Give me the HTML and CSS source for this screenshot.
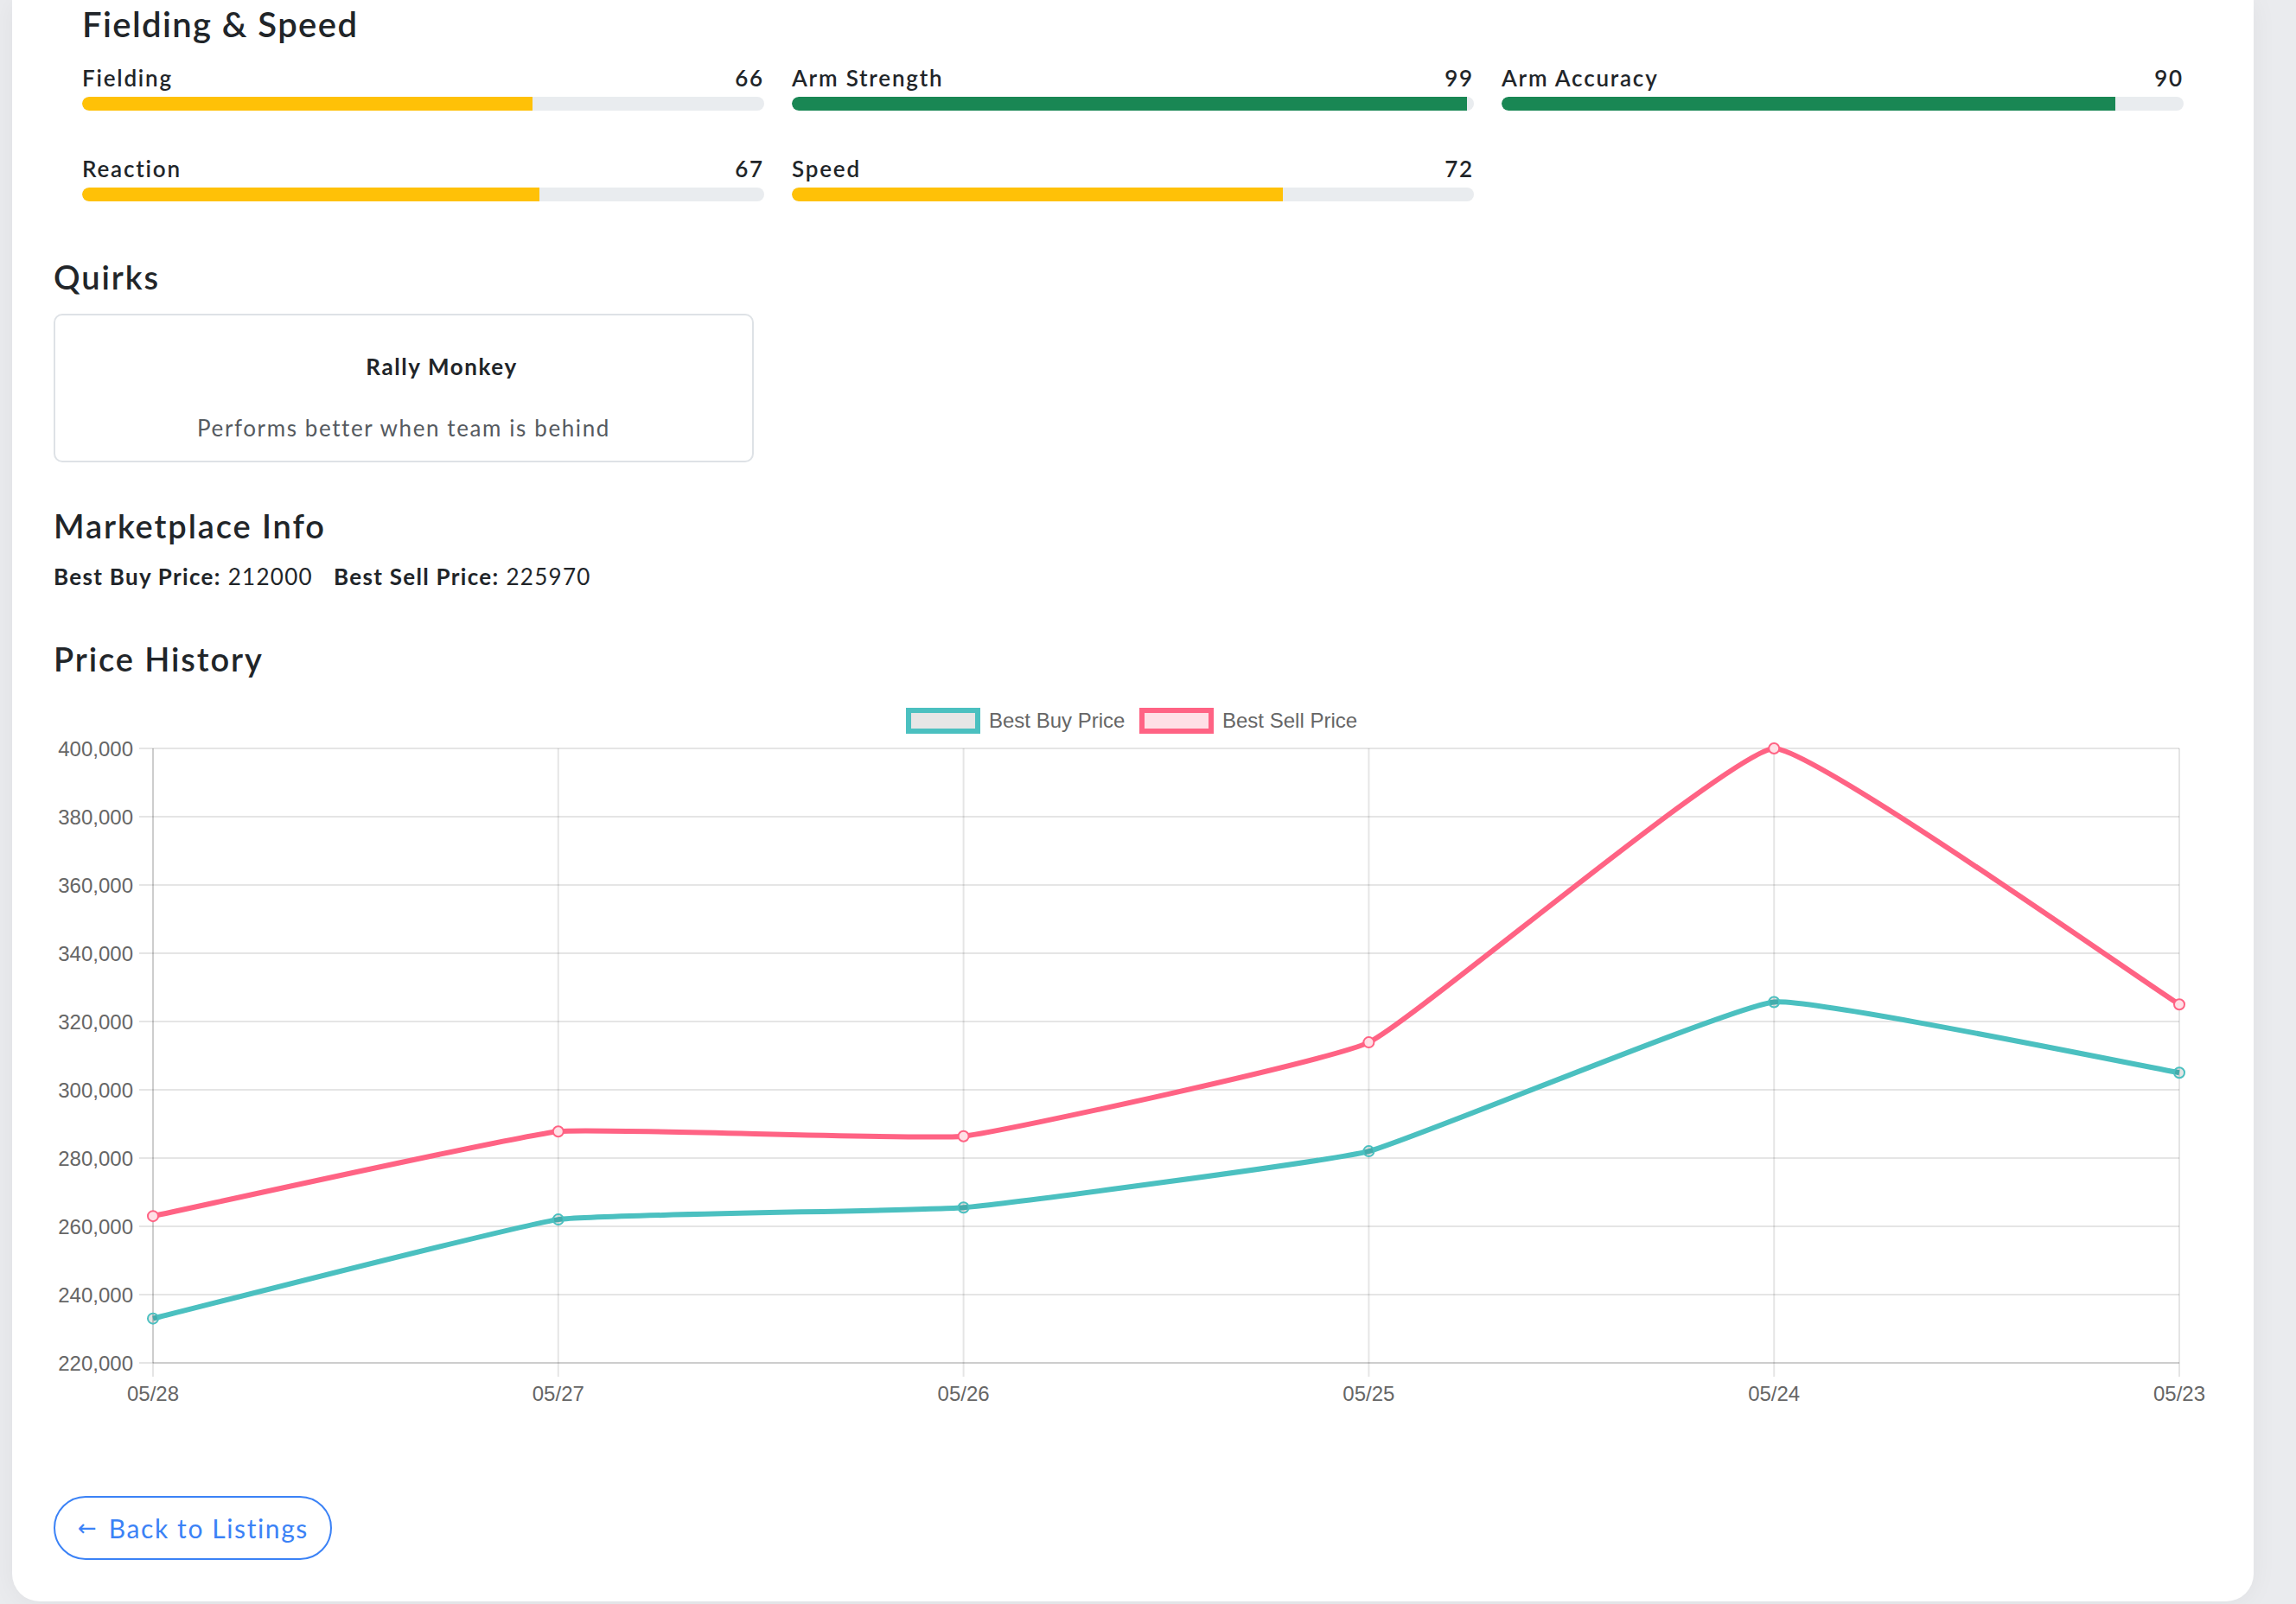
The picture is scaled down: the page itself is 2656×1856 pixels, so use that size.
FILE: index.html
```html
<!DOCTYPE html>
<html lang="en">
<head>
<meta charset="utf-8">
<title>Player Card</title>
<link rel="stylesheet" href="styles.css">
</head>
<body>
<div class="page">
  <main class="card">
    <section class="skills">
      <h3 class="skills-title">Fielding &amp; Speed</h3>
      <div class="skills-grid">
        <div class="stat">
          <div class="stat-head"><span>Fielding</span><span>66</span></div>
          <div class="bar"><div class="fill warn" style="width:66%"></div></div>
        </div>
        <div class="stat">
          <div class="stat-head"><span>Arm Strength</span><span>99</span></div>
          <div class="bar"><div class="fill good" style="width:99%"></div></div>
        </div>
        <div class="stat">
          <div class="stat-head"><span>Arm Accuracy</span><span>90</span></div>
          <div class="bar"><div class="fill good" style="width:90%"></div></div>
        </div>
        <div class="stat">
          <div class="stat-head"><span>Reaction</span><span>67</span></div>
          <div class="bar"><div class="fill warn" style="width:67%"></div></div>
        </div>
        <div class="stat">
          <div class="stat-head"><span>Speed</span><span>72</span></div>
          <div class="bar"><div class="fill warn" style="width:72%"></div></div>
        </div>
      </div>
    </section>

    <h2 class="section-title">Quirks</h2>
    <div class="quirk">
      <div class="quirk-name">Rally Monkey</div>
      <div class="quirk-desc">Performs better when team is behind</div>
    </div>

    <h2 class="section-title market-title">Marketplace Info</h2>
    <p class="prices"><span class="price"><b>Best Buy Price:</b> 212000</span><span class="price"><b>Best Sell Price:</b> 225970</span></p>

    <h2 class="section-title history-title">Price History</h2>
    <div class="chart">
      <svg class="chart-svg" width="2496" height="860" viewBox="0 0 2496 860" xmlns="http://www.w3.org/2000/svg">
        <!-- legend -->
        <rect x="989" y="22" width="80" height="24" fill="#e6e6e6" stroke="#4bc0c0" stroke-width="6"/>
        <text class="lbl" x="1082" y="42">Best Buy Price</text>
        <rect x="1259" y="22" width="80" height="24" fill="#ffe0e6" stroke="#ff6384" stroke-width="6"/>
        <text class="lbl" x="1352" y="42">Best Sell Price</text>

        <!-- grid -->
        <g stroke="rgba(0,0,0,0.1)" stroke-width="2">
          <line x1="99" y1="66" x2="2459" y2="66"/>
          <line x1="99" y1="145" x2="2459" y2="145"/>
          <line x1="99" y1="224" x2="2459" y2="224"/>
          <line x1="99" y1="303" x2="2459" y2="303"/>
          <line x1="99" y1="382" x2="2459" y2="382"/>
          <line x1="99" y1="461" x2="2459" y2="461"/>
          <line x1="99" y1="540" x2="2459" y2="540"/>
          <line x1="99" y1="619" x2="2459" y2="619"/>
          <line x1="99" y1="698" x2="2459" y2="698"/>
          <line x1="99" y1="777" x2="2459" y2="777"/>
          <line x1="115" y1="66" x2="115" y2="793"/>
          <line x1="583.8" y1="66" x2="583.8" y2="793"/>
          <line x1="1052.6" y1="66" x2="1052.6" y2="793"/>
          <line x1="1521.4" y1="66" x2="1521.4" y2="793"/>
          <line x1="1990.2" y1="66" x2="1990.2" y2="793"/>
          <line x1="2459" y1="66" x2="2459" y2="793"/>
          <line x1="115" y1="66" x2="115" y2="777"/>
          <line x1="115" y1="777" x2="2459" y2="777"/>
        </g>

        <!-- y labels -->
        <g class="lbl" text-anchor="end">
          <text x="92" y="74.5">400,000</text>
          <text x="92" y="153.5">380,000</text>
          <text x="92" y="232.5">360,000</text>
          <text x="92" y="311.5">340,000</text>
          <text x="92" y="390.5">320,000</text>
          <text x="92" y="469.5">300,000</text>
          <text x="92" y="548.5">280,000</text>
          <text x="92" y="627.5">260,000</text>
          <text x="92" y="706.5">240,000</text>
          <text x="92" y="785.5">220,000</text>
        </g>
        <!-- x labels -->
        <g class="lbl" text-anchor="middle">
          <text x="115" y="821">05/28</text>
          <text x="583.8" y="821">05/27</text>
          <text x="1052.6" y="821">05/26</text>
          <text x="1521.4" y="821">05/25</text>
          <text x="1990.2" y="821">05/24</text>
          <text x="2459" y="821">05/23</text>
        </g>

        <!-- sell line -->
        <path fill="none" stroke="#ff6384" stroke-width="6" stroke-linejoin="round"
          d="M115,607.15 C161.88,597.36 536.42,513.87 583.8,509.2 C630.18,504.63 1006.33,519.79 1052.6,514.7 C1100.09,509.48 1478.85,426.46 1521.4,406.1 C1572.61,381.59 1942.3,68.24 1990.2,66 C2036.06,66 2412.12,332.63 2459,362.25"/>
        <g fill="#ffe0e6" stroke="#ff6384" stroke-width="2">
          <circle cx="115" cy="607.15" r="6"/>
          <circle cx="583.8" cy="509.2" r="6"/>
          <circle cx="1052.6" cy="514.7" r="6"/>
          <circle cx="1521.4" cy="406.1" r="6"/>
          <circle cx="1990.2" cy="66" r="6"/>
          <circle cx="2459" cy="362.25" r="6"/>
        </g>

        <!-- buy line -->
        <path fill="none" stroke="#4bc0c0" stroke-width="6" stroke-linejoin="round"
          d="M115,725.65 C161.88,714.2 536.25,617.61 583.8,611.1 C630.01,604.77 1005.93,601.23 1052.6,597.3 C1099.69,593.33 1475.78,543.67 1521.4,532.1 C1569.55,519.89 1942.18,364.15 1990.2,359.5 C2035.94,355.07 2412.12,433.08 2459,441.25"/>
        <g fill="rgba(0,0,0,0.1)" stroke="#4bc0c0" stroke-width="2">
          <circle cx="115" cy="725.65" r="6"/>
          <circle cx="583.8" cy="611.1" r="6"/>
          <circle cx="1052.6" cy="597.3" r="6"/>
          <circle cx="1521.4" cy="532.1" r="6"/>
          <circle cx="1990.2" cy="359.5" r="6"/>
          <circle cx="2459" cy="441.25" r="6"/>
        </g>
      </svg>
    </div>

    <a class="back-btn" href="#"><span class="arrow">←</span><span class="btn-text">Back to Listings</span></a>
  </main>
</div>
</body>
</html>
```

FILE: styles.css
```css
* { box-sizing: border-box; }

html, body {
  margin: 0;
  padding: 0;
}

body {
  background: #eaebee;
  font-family: Lato, "Open Sans", "DejaVu Sans", sans-serif;
  color: #212529;
}

.page {
  padding: 0 49px 3px 14px;
}

.card {
  background: #ffffff;
  border-radius: 0 0 32px 32px;
  padding: 4px 48px 48px 48px;
  box-shadow: 0 2px 30px rgba(0, 0, 0, 0.05);
}

/* Fielding & Speed */
.skills {
  padding: 0 33px;
  margin-bottom: 64px;
}

.skills-title {
  margin: 0;
  font-size: 40px;
  line-height: 48px;
  font-weight: 600;
  letter-spacing: 1.4px;
}

.skills-grid {
  margin-top: 23px;
  display: grid;
  grid-template-columns: repeat(3, 1fr);
  column-gap: 32px;
  row-gap: 52px;
}

.stat-head {
  display: flex;
  justify-content: space-between;
  font-size: 26px;
  line-height: 30px;
  font-weight: 600;
  letter-spacing: 1.8px;
}

.bar {
  margin-top: 7px;
  height: 16px;
  background: #e9ecef;
  border-radius: 8px;
  overflow: hidden;
}

.fill {
  height: 100%;
  border-radius: 8px 0 0 8px;
}

.fill.warn { background: #ffc107; }
.fill.good { background: #198754; }

/* Section titles */
.section-title {
  margin: 0;
  font-size: 38px;
  line-height: 46px;
  font-weight: 600;
  letter-spacing: 1.9px;
}

.market-title { margin-top: 50px; }
.history-title { margin-top: 56px; }

/* Quirk */
.quirk {
  margin-top: 20px;
  width: 810px;
  border: 2px solid #dee2e6;
  border-radius: 10px;
  padding: 44px 20px 22px;
  text-align: center;
}

.quirk-name {
  font-size: 26px;
  line-height: 31px;
  font-weight: 700;
  letter-spacing: 1.6px;
  padding-left: 88px;
}

.quirk-desc {
  margin-top: 40px;
  font-size: 26px;
  line-height: 31px;
  font-weight: 400;
  letter-spacing: 1.6px;
  color: #555a60;
}

/* Prices */
.prices {
  margin: 21px 0 0;
  font-size: 26px;
  line-height: 31px;
  letter-spacing: 1.3px;
}

.price { margin-right: 24px; }
.price b { font-weight: 700; }

/* Chart */
.chart {
  margin-top: 15px;
  height: 860px;
}

.chart-svg {
  display: block;
}

.lbl {
  font-family: "Liberation Sans", Arial, sans-serif;
  font-size: 24px;
  fill: #666666;
}

/* Button */
.back-btn {
  margin-top: 71px;
  display: inline-flex;
  align-items: center;
  height: 74px;
  width: 322px;
  padding: 0 20px 0 26px;
  border: 2px solid #3b82f6;
  border-radius: 37px;
  color: #3b82f6;
  text-decoration: none;
  font-size: 30px;
  line-height: 1;
  white-space: nowrap;
}

.btn-text {
  letter-spacing: 1.6px;
}

.arrow {
  font-family: "DejaVu Sans", sans-serif;
  font-size: 26px;
  margin-right: 14px;
}
```
